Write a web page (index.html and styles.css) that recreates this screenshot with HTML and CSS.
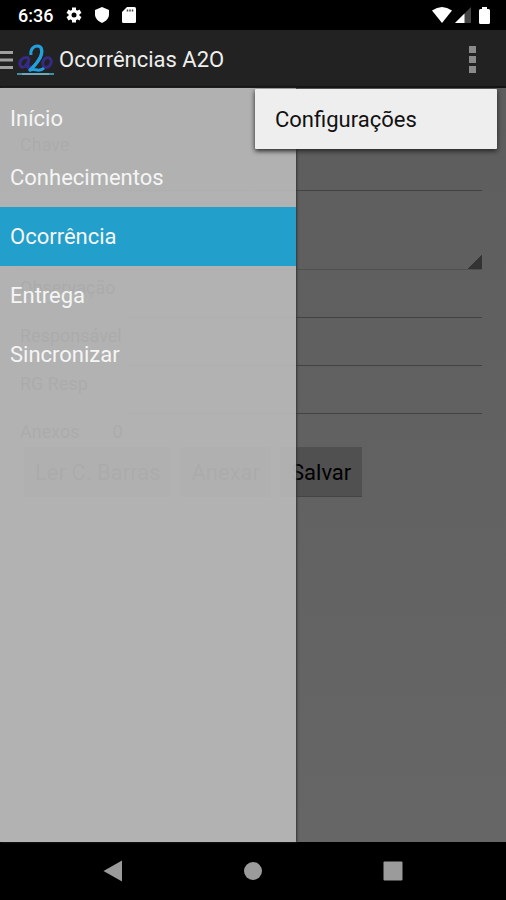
FILE: index.html
```html
<!DOCTYPE html>
<html lang="pt-BR">
  <head>
    <meta charset="utf-8">
    <meta name="viewport" content="width=device-width, initial-scale=1">
    <title>Ocorrências A2O</title>
    <link rel="stylesheet" href="styles.css">
  </head>
  <body>
    <div class="status">
      <span class="clock">6:36</span>
      <svg width="16" height="16" viewBox="0 0 16 16">
        <g stroke="#fff" stroke-width="4">
          <path d="M8 0.500V15.500M1.500 4.200L14.500 11.800M1.500 11.800L14.500 4.200"/>
        </g>
        <circle cx="8" cy="8" r="5.500" fill="#fff"/>
        <circle cx="8" cy="8" r="2.500" fill="#000"/>
      </svg>
      <svg width="14" height="16" viewBox="0 0 14 16">
        <path d="M7 0L14 3V7.500C14 11.500 10.500 14.500 7 16C3.500 14.500 0 11.500 0 7.500V3Z" fill="#fff"/>
      </svg>
      <svg width="14" height="16" viewBox="0 0 14 16">
        <path d="M5 0H12.500Q14 0 14 1.500V14.500Q14 16 12.500 16H1.500Q0 16 0 14.500V5Z" fill="#fff"/>
        <path d="M5.500 2.500V4.500M8 2.500V4.500M10.500 2.500V4.500" stroke="#444" stroke-width="1.500"/>
      </svg>
      <div class="signals">
        <svg width="20" height="16" viewBox="0 0 20 16">
          <path d="M0 3.500Q10 -3.500 20 3.500L10 16Z" fill="#fff"/>
        </svg>
        <svg width="16" height="16" viewBox="0 0 16 16">
          <path d="M0 16L16 0V16Z" fill="#444"/>
          <path d="M0 16L9.500 6.500V16Z" fill="#fff"/>
        </svg>
        <svg class="battery" width="11" height="17" viewBox="0 0 11 17">
          <path d="M3 0H8V2H9.500Q11 2 11 3.500V15.500Q11 17 9.500 17H1.500Q0 17 0 15.500V3.500Q0 2 1.500 2H3Z" fill="#fff"/>
        </svg>
      </div>
    </div>

    <header class="bar">
      <button class="drawer-btn" aria-label="Menu">
        <svg width="13" height="20" viewBox="0 0 13 20">
          <path d="M0 2.500H13M0 10H13M0 17.500H13" stroke="#a0a0a0" stroke-width="3"/>
        </svg>
      </button>
      <svg class="logo" width="38" height="32" viewBox="0 0 38 32" fill="none">
        <g stroke="#352a86" stroke-width="3">
          <path d="M12 14C6 12 2 17 3 21C5 26 11 22 12 14L10.500 23Q12 25 15 22"/>
          <ellipse cx="30" cy="18.500" rx="4" ry="5" transform="rotate(25 30 18.500)"/>
        </g>
        <path d="M14 11C13 5 17 2 20 2C26 2 26 9 23 14C20 19 17 23 12 27C17 22 21 30 27 24" stroke="#229fdc" stroke-width="3"/>
        <path d="M24 4C26 9 23 16 16 23" stroke="#229fdc" stroke-width="3"/>
        <path d="M0 30H37" stroke="#3f8fa8" stroke-width="2"/>
        <path d="M5 30H32" stroke="#9fc3cc" stroke-width="1"/>
      </svg>
      <h1>Ocorrências A2O</h1>
      <button class="more" aria-label="Mais opções">
        <i></i><i></i><i></i>
      </button>
    </header>

    <main>
      <form>
        <div class="row key">
          <label for="chave">Chave</label>
          <input type="text" id="chave">
        </div>
        <div class="row spinner">
          <select aria-label="Ocorrência"></select>
        </div>
        <div class="row">
          <label for="obs">Observação</label>
          <input type="text" id="obs">
        </div>
        <div class="row">
          <label for="resp">Responsável</label>
          <input type="text" id="resp">
        </div>
        <div class="row">
          <label for="rg">RG Resp</label>
          <input type="text" id="rg">
        </div>
        <div class="anexos">
          <span>Anexos</span>
          <span>0</span>
        </div>
        <div class="buttons">
          <button type="button">Ler C. Barras</button>
          <button type="button">Anexar</button>
          <button type="button">Salvar</button>
        </div>
      </form>

      <nav class="drawer">
        <a href="#">Início</a>
        <a href="#">Conhecimentos</a>
        <a href="#" class="active">Ocorrência</a>
        <a href="#">Entrega</a>
        <a href="#">Sincronizar</a>
      </nav>

      <div class="menu">
        <button>Configurações</button>
      </div>
    </main>

    <footer class="navbar">
      <button aria-label="Voltar">
        <svg width="20" height="22" viewBox="0 0 20 22"><path d="M0.500 11L19 0.500V21.500Z" fill="#9b9b9b"/></svg>
      </button>
      <button aria-label="Início">
        <svg width="20" height="20" viewBox="0 0 20 20"><circle cx="10" cy="10" r="9" fill="#9b9b9b"/></svg>
      </button>
      <button aria-label="Recentes">
        <svg width="20" height="20" viewBox="0 0 20 20"><rect x="0.500" y="0.500" width="19" height="19" rx="1" fill="#9b9b9b"/></svg>
      </button>
    </footer>
  </body>
</html>
```
FILE: styles.css
```css
* {
  box-sizing: border-box;
}
body {
  margin: 0;
  min-height: 100vh;
  display: flex;
  flex-direction: column;
  background-color: #000;
  font-family: Roboto, sans-serif;
  font-size: 22px;
}
button {
  font: inherit;
  border: none;
  padding: 0;
  background: none;
  color: inherit;
}
svg {
  display: block;
}

/* status bar */
.status {
  height: 30px;
  display: flex;
  align-items: center;
  gap: 13px;
  padding: 0 16px 0 18px;
  color: #fff;
}
.clock {
  font-size: 18px;
  font-weight: 500;
}
.signals {
  margin-left: auto;
  display: flex;
  align-items: center;
  gap: 3px;
}
.battery {
  margin-left: 5px;
}

/* action bar */
.bar {
  height: 58px;
  display: flex;
  align-items: center;
  padding-top: 3px;
  background-color: #222;
  border-bottom: 2px solid #151515;
  color: #eee;
}
.logo {
  margin: 0 4px;
}
h1 {
  margin: 0;
  font-size: 22px;
  font-weight: normal;
}
.more {
  margin-left: auto;
  margin-right: 30px;
  display: flex;
  flex-direction: column;
  gap: 3px;
}
.more i {
  width: 7px;
  height: 7px;
  background-color: #8a8a8a;
}

main {
  flex: 1;
  position: relative;
  background: linear-gradient(#5d5d5d, #666);
}

/* form behind the drawer */
form {
  padding: 46px 24px 0 20px;
  font-size: 18px;
  line-height: 22px;
  color: #000;
}
.row {
  display: flex;
  height: 48px;
}
.row label {
  width: 107px;
  padding-top: 7px;
}
.row input,
.row select {
  flex: 1;
  min-width: 0;
  border: none;
  border-bottom: 1px solid #434343;
  border-radius: 0;
  background: none;
  font: inherit;
  appearance: none;
}
.key {
  height: 57px;
}
.row.key label {
  padding-top: 0;
}
.spinner {
  height: 79px;
}
.row select {
  border-color: #505050;
  background: linear-gradient(135deg, transparent 50%, #333 50%) right bottom / 14px 14px no-repeat;
}
.anexos {
  display: flex;
  gap: 33px;
  padding-top: 7px;
}
.buttons {
  display: flex;
  gap: 9px;
  padding: 4px;
}
.buttons button {
  height: 50px;
  padding: 2px 11px 0;
  background-color: #505050;
  border-bottom: 1px solid #444;
  color: #000;
  font-size: 22px;
}

.drawer {
  position: absolute;
  top: 0;
  bottom: 0;
  left: 0;
  width: 296px;
  padding-top: 1px;
  background-color: rgba(184, 184, 184, 0.93);
  box-shadow: 1px 0 2px #333;
}
.drawer a {
  display: block;
  padding-left: 10px;
  line-height: 59px;
  color: #f5f5f5;
  text-decoration: none;
}
.drawer .active {
  background-color: #229fca;
}

/* overflow menu */
.menu {
  position: absolute;
  top: 1px;
  right: 9px;
  width: 242px;
  background-color: #eee;
  border-radius: 1px;
  box-shadow: 0 2px 5px #222;
}
.menu button {
  width: 100%;
  height: 60px;
  padding-left: 20px;
  text-align: left;
  color: #111;
}

/* system buttons */
.navbar {
  height: 58px;
  display: flex;
  justify-content: center;
  align-items: center;
  gap: 120px;
}
```
